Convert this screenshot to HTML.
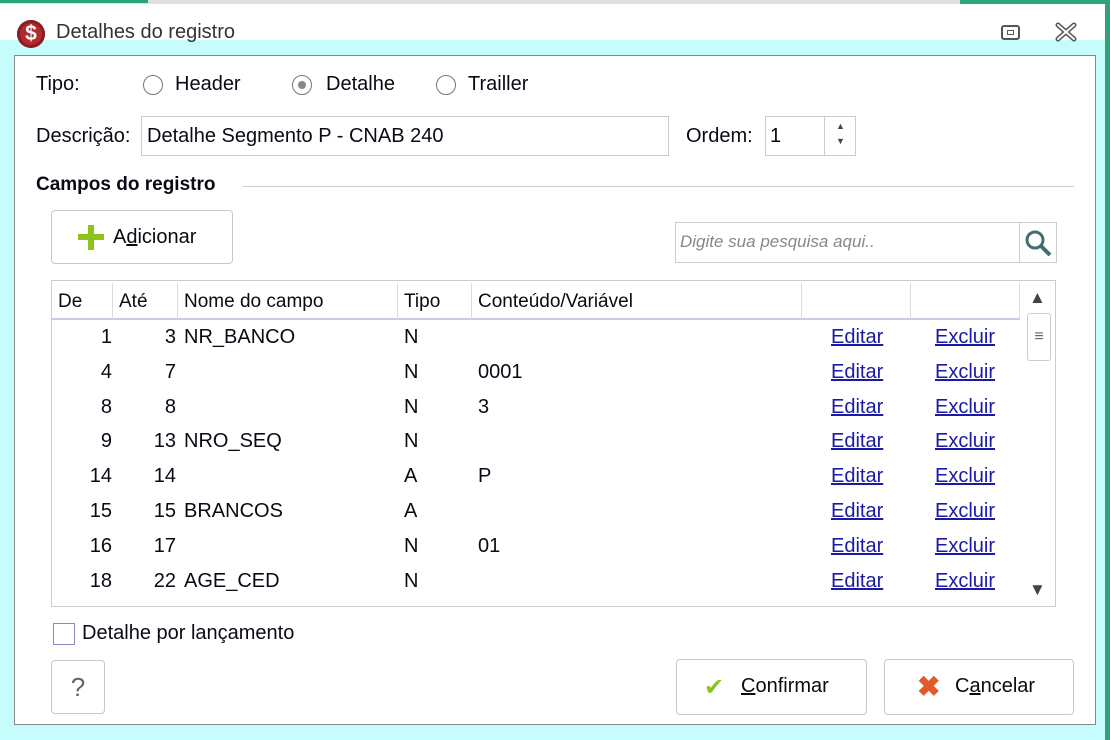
<!DOCTYPE html>
<html><head><meta charset="utf-8"><style>
*{box-sizing:border-box;margin:0;padding:0}
body{width:1110px;height:740px;overflow:hidden;background:#fff;font-family:"Liberation Sans",sans-serif;font-size:20px;color:#0a0a14;position:relative}
.a{position:absolute;white-space:nowrap}
.radio{position:absolute;width:20px;height:20px;border:1px solid #777;border-radius:50%;background:#fff}
.lnk{color:#1a1aa6;text-decoration:underline}
.btn{position:absolute;border:1px solid #c8c8c8;border-radius:4px;background:#fff}
.hd{position:absolute;top:283px;height:36px;border-right:1px solid #ddd;padding:8px 6px;font-size:19px}
</style></head><body>
<div class="a" style="left:0;top:0;width:1110px;height:4px;background:#e0e0e0"></div>
<div class="a" style="left:0;top:0;width:148px;height:3px;background:#2aa57a"></div>
<div class="a" style="left:960px;top:0;width:150px;height:4px;background:#2aa57a"></div>
<div class="a" style="left:1105px;top:0;width:5px;height:740px;background:#2aa57a"></div>
<div class="a" style="left:0;top:40px;width:1105px;height:700px;background:#c6fcfc"></div>
<div class="a" style="left:14px;top:55px;width:1082px;height:670px;background:#fff;border:1px solid #888"></div>
<!-- title -->
<div class="a" style="left:17px;top:20px;width:28px;height:28px;border-radius:50%;background:#b02a30;color:#fff;font-weight:bold;font-size:21px;text-align:center;line-height:28px;box-shadow:inset 0 0 0 3px #8a1d22">$</div>
<div class="a" style="left:56px;top:21px;font-size:20px;color:#333">Detalhes do registro</div>
<div class="a" style="left:1001px;top:25px;width:19px;height:15px;border:2px solid #555;border-radius:3px"></div>
<div class="a" style="left:1007px;top:30px;width:7px;height:5px;border:1.5px solid #555"></div>
<svg class="a" style="left:1055px;top:22px" width="22" height="20"><path d="M3 3 L19 17 M19 3 L3 17" stroke="#555" stroke-width="5" stroke-linecap="round"/><path d="M3 3 L19 17 M19 3 L3 17" stroke="#fff" stroke-width="2" stroke-linecap="round"/></svg>
<!-- tipo -->
<div class="a" style="left:36px;top:73px">Tipo:</div>
<div class="radio" style="left:143px;top:75px"></div><div class="a" style="left:175px;top:73px">Header</div>
<div class="radio" style="left:292px;top:75px"></div><div class="a" style="left:298px;top:81px;width:8px;height:8px;border-radius:50%;background:#888"></div><div class="a" style="left:326px;top:73px">Detalhe</div>
<div class="radio" style="left:436px;top:75px"></div><div class="a" style="left:468px;top:73px">Trailler</div>
<div class="a" style="left:36px;top:125px">Descrição:</div>
<div class="a" style="left:141px;top:116px;width:528px;height:40px;border:1px solid #ccc;padding:8px 5px">Detalhe Segmento P - CNAB 240</div>
<div class="a" style="left:686px;top:125px">Ordem:</div>
<div class="a" style="left:765px;top:116px;width:91px;height:40px;border:1px solid #ccc;padding:8px 4px">1</div>
<div class="a" style="left:824px;top:116px;width:1px;height:40px;background:#ccc"></div>
<div class="a" style="left:836px;top:121px;font-size:9px;color:#444">▲</div>
<div class="a" style="left:836px;top:136px;font-size:9px;color:#444">▼</div>
<div class="a" style="left:36px;top:174px;font-weight:bold;font-size:19px">Campos do registro</div>
<div class="a" style="left:243px;top:186px;width:831px;height:1px;background:#ccc"></div>
<!-- adicionar -->
<div class="btn" style="left:51px;top:210px;width:182px;height:54px"></div>
<div class="a" style="left:78px;top:234px;width:26px;height:6px;background:#8cc31f"></div>
<div class="a" style="left:88px;top:225px;width:6px;height:25px;background:#8cc31f"></div>
<div class="a" style="left:113px;top:226px">A<u>d</u>icionar</div>
<!-- search -->
<div class="a" style="left:675px;top:222px;width:382px;height:41px;border:1px solid #ccc;padding:9px 4px;font-style:italic;color:#888;font-size:17px">Digite sua pesquisa aqui..</div>
<div class="a" style="left:1019px;top:222px;width:1px;height:41px;background:#ccc"></div>
<svg class="a" style="left:1022px;top:228px" width="32" height="30"><circle cx="13" cy="12" r="8" fill="none" stroke="#3f6f70" stroke-width="3"/><line x1="19" y1="18" x2="28" y2="27" stroke="#3f6f70" stroke-width="4"/></svg>
<!-- table -->
<div class="a" style="left:51px;top:280px;width:1005px;height:327px;border:1px solid #ccc"></div>
<div class="a" style="left:52px;top:318px;width:968px;height:2px;background:#c9c9e8"></div>
<div class="hd" style="left:52px;width:61px">De</div>
<div class="hd" style="left:113px;width:65px">Até</div>
<div class="hd" style="left:178px;width:220px">Nome do campo</div>
<div class="hd" style="left:398px;width:74px">Tipo</div>
<div class="hd" style="left:472px;width:330px">Conteúdo/Variável</div>
<div class="hd" style="left:802px;width:109px"></div>
<div class="hd" style="left:911px;width:109px"></div>
<div class="a" style="left:1029px;top:288px;font-size:17px;color:#444">▲</div>
<div class="a" style="left:1027px;top:313px;width:24px;height:48px;border:1px solid #ccc;border-radius:3px;text-align:center;font-size:16px;line-height:46px;color:#666">≡</div>
<div class="a" style="left:1029px;top:580px;font-size:17px;color:#444">▼</div>
<div id="rows"></div>
<!-- bottom -->
<div class="a" style="left:53px;top:623px;width:22px;height:22px;border:1px solid #8888bb"></div>
<div class="a" style="left:82px;top:622px">Detalhe por lançamento</div>
<div class="btn" style="left:51px;top:660px;width:54px;height:54px;text-align:center;font-size:26px;line-height:52px;color:#666">?</div>
<div class="btn" style="left:676px;top:659px;width:191px;height:56px"></div>
<div class="a" style="left:704px;top:673px;font-size:24px;color:#8cc31f">✔</div>
<div class="a" style="left:741px;top:675px"><u>C</u>onfirmar</div>
<div class="btn" style="left:884px;top:659px;width:190px;height:56px"></div>
<div class="a" style="left:917px;top:670px;font-size:28px;font-weight:bold;color:#e05a2a">✖</div>
<div class="a" style="left:955px;top:675px">C<u>a</u>ncelar</div>
<script>
var d=[["1","3","NR_BANCO","N",""],["4","7","","N","0001"],["8","8","","N","3"],["9","13","NRO_SEQ","N",""],["14","14","","A","P"],["15","15","BRANCOS","A",""],["16","17","","N","01"],["18","22","AGE_CED","N",""]];
var h="";d.forEach(function(r,i){var y=326+i*34.8;
h+='<div class="a" style="left:52px;top:'+y+'px;width:60px;text-align:right">'+r[0]+'</div>';
h+='<div class="a" style="left:113px;top:'+y+'px;width:63px;text-align:right">'+r[1]+'</div>';
h+='<div class="a" style="left:184px;top:'+y+'px">'+r[2]+'</div>';
h+='<div class="a" style="left:404px;top:'+y+'px">'+r[3]+'</div>';
h+='<div class="a" style="left:478px;top:'+y+'px">'+r[4]+'</div>';
h+='<div class="a lnk" style="left:831px;top:'+y+'px">Editar</div>';
h+='<div class="a lnk" style="left:935px;top:'+y+'px">Excluir</div>';});
document.getElementById("rows").innerHTML=h;
</script>
</body></html>
